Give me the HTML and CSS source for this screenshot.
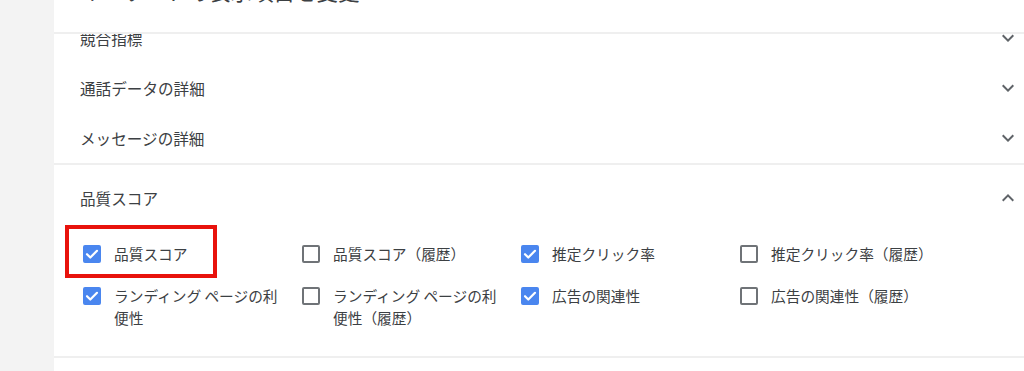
FILE: index.html
```html
<!DOCTYPE html>
<html lang="ja">
<head>
<meta charset="utf-8">
<title>表示項目</title>
<link rel="stylesheet" href="styles.css">
</head>
<body>
<div class="page">
  <aside class="rail"></aside>
  <main class="panel">
    <header class="panel-head">
      <h1 class="title">キーワードの表示項目を変更</h1>
      <svg class="chev head-chev" viewBox="0 0 24 24"><path d="M16.59 8.59L12 13.17 7.41 8.59 6 10l6 6 6-6z"/></svg>
    </header>
    <div class="scroll">
      <div class="scroll-inner">
        <div class="group">
          <div class="row"><span class="row-label">競合指標</span><svg class="chev" viewBox="0 0 24 24"><path d="M16.59 8.59L12 13.17 7.41 8.59 6 10l6 6 6-6z"/></svg></div>
          <div class="row"><span class="row-label">通話データの詳細</span><svg class="chev" viewBox="0 0 24 24"><path d="M16.59 8.59L12 13.17 7.41 8.59 6 10l6 6 6-6z"/></svg></div>
          <div class="row"><span class="row-label">メッセージの詳細</span><svg class="chev" viewBox="0 0 24 24"><path d="M16.59 8.59L12 13.17 7.41 8.59 6 10l6 6 6-6z"/></svg></div>
        </div>
        <section class="qs">
          <div class="qs-head"><span class="row-label">品質スコア</span><svg class="chev" viewBox="0 0 24 24"><path d="M12 8l-6 6 1.41 1.41L12 10.83l4.59 4.58L18 14z"/></svg></div>
          <div class="qs-grid">
            <label class="item highlight"><span class="box checked"><svg viewBox="0 0 18 18"><path d="M4 9.2l3.3 3.3L14 5.8"/></svg></span><span class="item-text">品質スコア</span></label>
            <label class="item"><span class="box"></span><span class="item-text">品質スコア（履歴）</span></label>
            <label class="item"><span class="box checked"><svg viewBox="0 0 18 18"><path d="M4 9.2l3.3 3.3L14 5.8"/></svg></span><span class="item-text">推定クリック率</span></label>
            <label class="item"><span class="box"></span><span class="item-text">推定クリック率（履歴）</span></label>
            <label class="item"><span class="box checked"><svg viewBox="0 0 18 18"><path d="M4 9.2l3.3 3.3L14 5.8"/></svg></span><span class="item-text">ランディング ページの利便性</span></label>
            <label class="item"><span class="box"></span><span class="item-text">ランディング ページの利便性（履歴）</span></label>
            <label class="item"><span class="box checked"><svg viewBox="0 0 18 18"><path d="M4 9.2l3.3 3.3L14 5.8"/></svg></span><span class="item-text">広告の関連性</span></label>
            <label class="item"><span class="box"></span><span class="item-text">広告の関連性（履歴）</span></label>
          </div>
        </section>
      </div>
    </div>
  </main>
</div>
</body>
</html>
```

FILE: styles.css
```css
html, body {
  margin: 0;
  padding: 0;
  height: 100%;
  background: #ffffff;
}

body {
  font-family: "Noto Sans CJK JP", "Noto Sans", sans-serif;
  color: #3c4043;
}

.page {
  display: flex;
  height: 371px;
  overflow: hidden;
}

.rail {
  width: 54px;
  flex: none;
  background: #f3f3f3;
}

.panel {
  flex: 1;
  display: flex;
  flex-direction: column;
  background: #ffffff;
  min-width: 0;
}

.panel-head {
  height: 32px;
  border-bottom: 2px solid #efefef;
  overflow: hidden;
  display: flex;
  justify-content: space-between;
  align-items: flex-start;
  padding-left: 26px;
  position: relative;
  z-index: 1;
  background: #ffffff;
}

.title {
  margin: -21px 0 0 0;
  font-size: 21.5px;
  line-height: 24px;
  font-weight: 400;
  color: #3c4043;
  white-space: nowrap;
}

.head-chev {
  margin-top: -17px;
  margin-right: -6px;
}

.scroll {
  flex: 1;
  overflow: hidden;
}

.scroll-inner {
  margin-top: -21px;
}

.group {
  border-bottom: 2px solid #efefef;
}

.row {
  height: 50px;
  display: flex;
  align-items: center;
  justify-content: space-between;
  padding-left: 26px;
  padding-right: 4px;
}

.row-label {
  font-size: 15.6px;
  line-height: 22px;
  color: #3c4043;
}

.chev {
  width: 24px;
  height: 24px;
  flex: none;
  fill: #5f6368;
}

.qs {
  padding: 22px 0 27px 0;
  border-bottom: 2px solid #efefef;
}

.qs-head {
  display: flex;
  align-items: center;
  justify-content: space-between;
  padding-left: 26px;
  padding-right: 4px;
  height: 22px;
}

.qs-grid {
  display: grid;
  grid-template-columns: repeat(4, 219px);
  row-gap: 20px;
  padding-left: 29px;
  margin-top: 34px;
}

.item {
  display: flex;
  align-items: flex-start;
  gap: 13px;
  position: relative;
}

.item-text {
  font-size: 14.7px;
  line-height: 22px;
  color: #3c4043;
  max-width: 172px;
}

.box {
  width: 14px;
  height: 14px;
  border: 2px solid #6f7377;
  border-radius: 2px;
  flex: none;
  margin-top: 2px;
  display: flex;
  align-items: center;
  justify-content: center;
}

.box.checked {
  background: #4a86ef;
  border-color: #4a86ef;
}

.box svg {
  width: 18px;
  height: 18px;
  flex: none;
  fill: none;
  stroke: #ffffff;
  stroke-width: 2.2;
  stroke-linecap: round;
  stroke-linejoin: round;
}

.highlight::after {
  content: "";
  position: absolute;
  left: -18px;
  top: -18px;
  width: 144px;
  height: 45px;
  border: 4px solid #e8120c;
}
```
